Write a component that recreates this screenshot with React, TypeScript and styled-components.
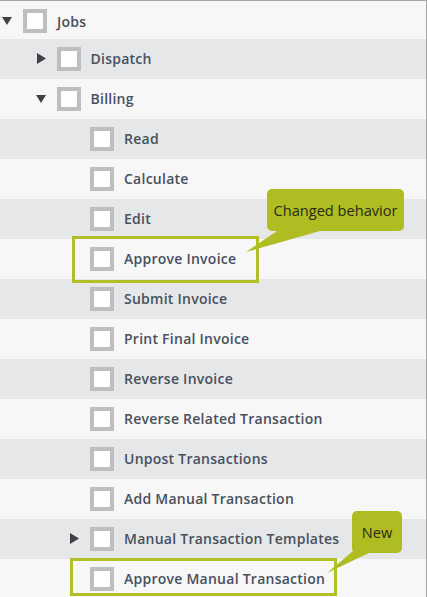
import React from "react";
import styled, { createGlobalStyle } from "styled-components";

const Global = createGlobalStyle`
  html, body { margin: 0; padding: 0; background: #f7f7f7; overflow: hidden; }
  body { font-family: "Open Sans", "Liberation Sans", sans-serif; }
`;

const Tree = styled.div`
  width: 427px;
  height: 597px;
  box-sizing: border-box;
  border-top: 1px solid #a7a7a7;
  border-right: 1px solid #a7a7a7;
  overflow: hidden;
  display: flex;
  flex-direction: column;
`;

const Row = styled.div<{ $level: number; $striped: boolean; $first?: boolean }>`
  position: relative;
  flex: 0 0 auto;
  box-sizing: border-box;
  height: ${(p) => (p.$first ? 38 : 40)}px;
  padding-top: ${(p) => (p.$first ? 3 : 0)}px;
  padding-left: ${(p) => 2 + p.$level * 33.5}px;
  display: flex;
  align-items: center;
  background: ${(p) => (p.$striped ? "#e6e7e9" : "#f7f7f7")};
`;

const Toggle = styled.span`
  width: 21px;
  height: 12px;
  flex: 0 0 21px;
  display: flex;
  align-items: center;
  margin-top: -1px;
`;

const Box = styled.span`
  width: 24px;
  height: 24px;
  flex: 0 0 24px;
  box-sizing: border-box;
  border: 4px solid #bdbec0;
  background: #ffffff;
  margin-top: -1px;
`;

const Label = styled.span`
  margin-left: 10px;
  margin-top: -1px;
  font-size: 14px;
  font-weight: 600;
  color: #47505e;
  white-space: nowrap;
  letter-spacing: 0.25px;
`;

const Highlight = styled.div<{ $left: number; $top: number; $w: number; $h: number }>`
  position: absolute;
  z-index: 1;
  left: ${(p) => p.$left}px;
  top: ${(p) => p.$top}px;
  width: ${(p) => p.$w}px;
  height: ${(p) => p.$h}px;
  box-sizing: border-box;
  border: 3px solid #b2bf26;
  pointer-events: none;
`;

const Callout = styled.div<{ $left: number; $top: number; $w: number }>`
  position: absolute;
  z-index: 2;
  left: ${(p) => p.$left}px;
  top: ${(p) => p.$top}px;
  width: ${(p) => p.$w}px;
  height: 42px;
  box-sizing: border-box;
  border-radius: 5px;
  background: #afbd23;
  color: #2a2b17;
  font-size: 14.6px;
  font-weight: 400;
  display: flex;
  align-items: center;
  justify-content: center;
  white-space: nowrap;
`;

const Tail = styled.svg<{ $left: number; $top: number }>`
  position: absolute;
  z-index: 2;
  left: ${(p) => p.$left}px;
  top: ${(p) => p.$top}px;
  overflow: visible;
`;

const Down = () => (
  <svg width="10" height="8" viewBox="0 0 10 8">
    <polygon points="0,0 10,0 5,8" fill="#3f4145" />
  </svg>
);
const Right = () => (
  <svg width="9" height="11" viewBox="0 0 9 11" style={{ marginLeft: 1 }}>
    <polygon points="0,0 9,5.5 0,11" fill="#3f4145" />
  </svg>
);

type Item = { label: string; level: number; toggle?: "down" | "right" };

const items: Item[] = [
  { label: "Jobs", level: 0, toggle: "down" },
  { label: "Dispatch", level: 1, toggle: "right" },
  { label: "Billing", level: 1, toggle: "down" },
  { label: "Read", level: 2 },
  { label: "Calculate", level: 2 },
  { label: "Edit", level: 2 },
  { label: "Approve Invoice", level: 2 },
  { label: "Submit Invoice", level: 2 },
  { label: "Print Final Invoice", level: 2 },
  { label: "Reverse Invoice", level: 2 },
  { label: "Reverse Related Transaction", level: 2 },
  { label: "Unpost Transactions", level: 2 },
  { label: "Add Manual Transaction", level: 2 },
  { label: "Manual Transaction Templates", level: 2, toggle: "right" },
  { label: "Approve Manual Transaction", level: 2 },
];

export default function App() {
  return (
    <>
      <Global />
      <Tree>
        {items.map((it, i) => (
          <Row key={it.label} $level={it.level} $striped={i % 2 === 1} $first={i === 0}>
            <Toggle>{it.toggle === "down" ? <Down /> : it.toggle === "right" ? <Right /> : null}</Toggle>
            <Box />
            <Label>{it.label}</Label>
            {it.label === "Approve Invoice" && (
              <>
                <Highlight $left={72} $top={-3} $w={187} $h={47} />
                <Callout $left={267} $top={-50} $w={137}>Changed behavior</Callout>
                <Tail $left={244} $top={-10} width="85" height="25" viewBox="0 0 85 25">
                  <polygon points="36,0 83,0 2,23" fill="#afbd23" />
                </Tail>
              </>
            )}
            {it.label === "Approve Manual Transaction" && (
              <>
                <Highlight $left={70} $top={-1} $w={267} $h={38} />
                <Callout $left={352} $top={-48} $w={50}>New</Callout>
                <Tail $left={325} $top={-8} width="50" height="25" viewBox="0 0 50 25">
                  <polygon points="28,0 48,0 2,22" fill="#afbd23" />
                </Tail>
              </>
            )}
          </Row>
        ))}
      </Tree>
    </>
  );
}
